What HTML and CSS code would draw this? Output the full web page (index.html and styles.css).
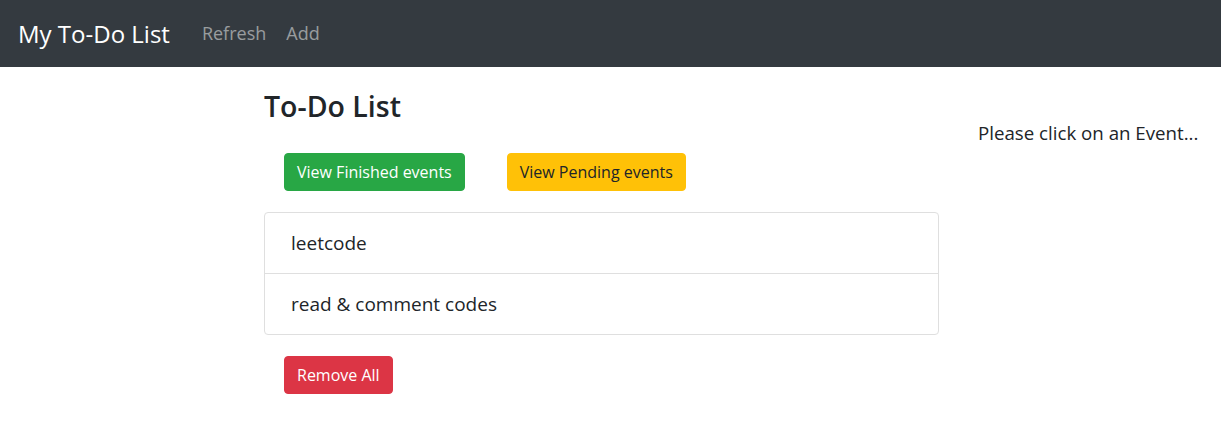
FILE: index.html
```html
<!DOCTYPE html>
<html lang="en">
<head>
<meta charset="utf-8">
<title>My To-Do List</title>
<link rel="stylesheet" href="styles.css">
</head>
<body>
<nav class="navbar">
  <a class="brand" href="#">My To-Do List</a>
  <a class="nav-link" href="#">Refresh</a>
  <a class="nav-link" href="#">Add</a>
</nav>
<div class="page">
  <main class="main">
    <h3 class="title">To-Do List</h3>
    <div class="filters">
      <button class="btn btn-success">View Finished events</button>
      <button class="btn btn-warning">View Pending events</button>
    </div>
    <ul class="list-group">
      <li class="list-item">leetcode</li>
      <li class="list-item">read &amp; comment codes</li>
    </ul>
    <div class="actions">
      <button class="btn btn-danger">Remove All</button>
    </div>
  </main>
  <aside class="detail">
    <p class="hint">Please click on an Event...</p>
  </aside>
</div>
</body>
</html>
```
FILE: styles.css
```css
* { box-sizing: border-box; }
html, body { margin: 0; padding: 0; }
body {
  font-family: "Open Sans", "Noto Sans", sans-serif;
  color: #212529;
  background: #fff;
  width: 1221px;
  height: 438px;
  overflow: hidden;
}
.navbar {
  height: 67px;
  background: #343a40;
  display: flex;
  align-items: center;
  padding: 0 16px 1px 18px;
}
.navbar a { text-decoration: none; }
.brand {
  color: #fff;
  font-size: 24px;
  margin-right: 22px;
}
.nav-link {
  color: rgba(255, 255, 255, 0.5);
  font-size: 18px;
  padding: 0 10px;
}
.page {
  display: flex;
}
.main {
  margin-left: 264px;
  width: 675px;
}
.title {
  margin: 22px 0 0;
  font-size: 28.5px;
  font-weight: 600;
  line-height: 1.2;
}
.filters {
  display: flex;
  gap: 42px;
  margin: 30px 0 0 20px;
}
.btn {
  font-family: inherit;
  font-size: 16px;
  line-height: 24px;
  height: 38px;
  padding: 6px 12px;
  border: 1px solid transparent;
  border-radius: 4px;
  color: #fff;
}
.btn-success { background: #28a745; border-color: #28a745; }
.btn-warning { background: #ffc107; border-color: #ffc107; color: #212529; }
.btn-danger { background: #dc3545; border-color: #dc3545; }
.list-group {
  list-style: none;
  margin: 21px 0 0;
  padding: 0;
  border: 1px solid #dfdfdf;
  border-radius: 4px;
}
.list-item {
  font-size: 19px;
  line-height: 28px;
  padding: 16px 26px;
}
.list-item + .list-item { border-top: 1px solid #dfdfdf; }
.actions {
  margin: 21px 0 0 20px;
}
.detail {
  margin-left: 39px;
}
.hint {
  margin: 52px 0 0;
  font-size: 18.7px;
  line-height: 28px;
}
```
